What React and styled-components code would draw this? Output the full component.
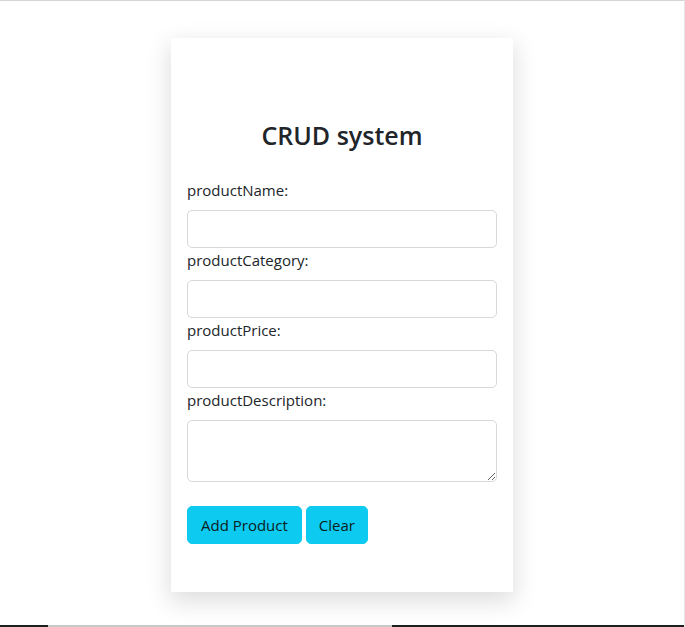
import styled, { createGlobalStyle } from "styled-components";

const GlobalStyle = createGlobalStyle`
  * {
    box-sizing: border-box;
  }
  body {
    margin: 0;
    background: #ffffff;
    font-family: "Open Sans", "Liberation Sans", sans-serif;
    color: #212529;
  }
`;

const Page = styled.div`
  position: relative;
  height: 627px;
  border-top: 1px solid #d4d4d4;
  border-right: 1px solid #e6e6e6;
  padding-top: 37px;
  overflow: hidden;
`;

const Card = styled.div`
  width: 342px;
  margin: 0 auto;
  padding: 81px 16px 48px;
  background: #ffffff;
  box-shadow: 0px 8px 22px 2px rgba(0, 0, 0, 0.13);
`;

const Title = styled.h3`
  margin: 0 0 27px;
  font-size: 25px;
  font-weight: 600;
  line-height: 32px;
  text-align: center;
  color: #212529;
`;

const Field = styled.div`
  display: flex;
  flex-direction: column;
`;

const Label = styled.label`
  display: block;
  margin-bottom: 8px;
  font-size: 15px;
  line-height: 24px;
  color: #212529;
`;

const Input = styled.input`
  display: block;
  width: 100%;
  height: 38px;
  padding: 6px 12px;
  font-family: inherit;
  font-size: 16px;
  border: 1px solid #d6d9dc;
  border-radius: 5px;
  background: #ffffff;
  outline: none;
`;

const TextArea = styled.textarea`
  display: block;
  width: 100%;
  height: 62px;
  padding: 6px 12px;
  font-family: inherit;
  font-size: 16px;
  border: 1px solid #d6d9dc;
  border-radius: 5px;
  resize: vertical;
  outline: none;
`;

const Actions = styled.div`
  display: flex;
  gap: 4px;
  margin-top: 24px;
`;

const Button = styled.button`
  height: 38px;
  padding: 0 ${({ tight }) => (tight ? "12px" : "13px")};
  font-family: inherit;
  font-size: 15px;
  color: #0b1d22;
  background: #0dcaf0;
  border: 1px solid #0dcaf0;
  border-radius: 5px;
  cursor: pointer;
`;

const BottomBar = styled.div`
  position: absolute;
  left: 0;
  right: 0;
  bottom: 0;
  height: 2px;
  display: flex;
`;

const BarPart = styled.div`
  width: ${({ w }) => w};
  flex: ${({ grow }) => (grow ? 1 : "none")};
  background: ${({ dark }) => (dark ? "#1e1e1e" : "#c8c8c8")};
`;

const fields = ["productName", "productCategory", "productPrice"];

export default function App() {
  return (
    <>
      <GlobalStyle />
      <Page>
        <Card>
          <Title>CRUD system</Title>
          {fields.map((name) => (
            <Field key={name}>
              <Label>{name}:</Label>
              <Input type="text" />
            </Field>
          ))}
          <Field>
            <Label>productDescription:</Label>
            <TextArea rows={2} />
          </Field>
          <Actions>
            <Button>Add Product</Button>
            <Button tight>Clear</Button>
          </Actions>
        </Card>
        <BottomBar>
          <BarPart dark w="48px" />
          <BarPart w="344px" />
          <BarPart dark grow />
        </BottomBar>
      </Page>
    </>
  );
}
